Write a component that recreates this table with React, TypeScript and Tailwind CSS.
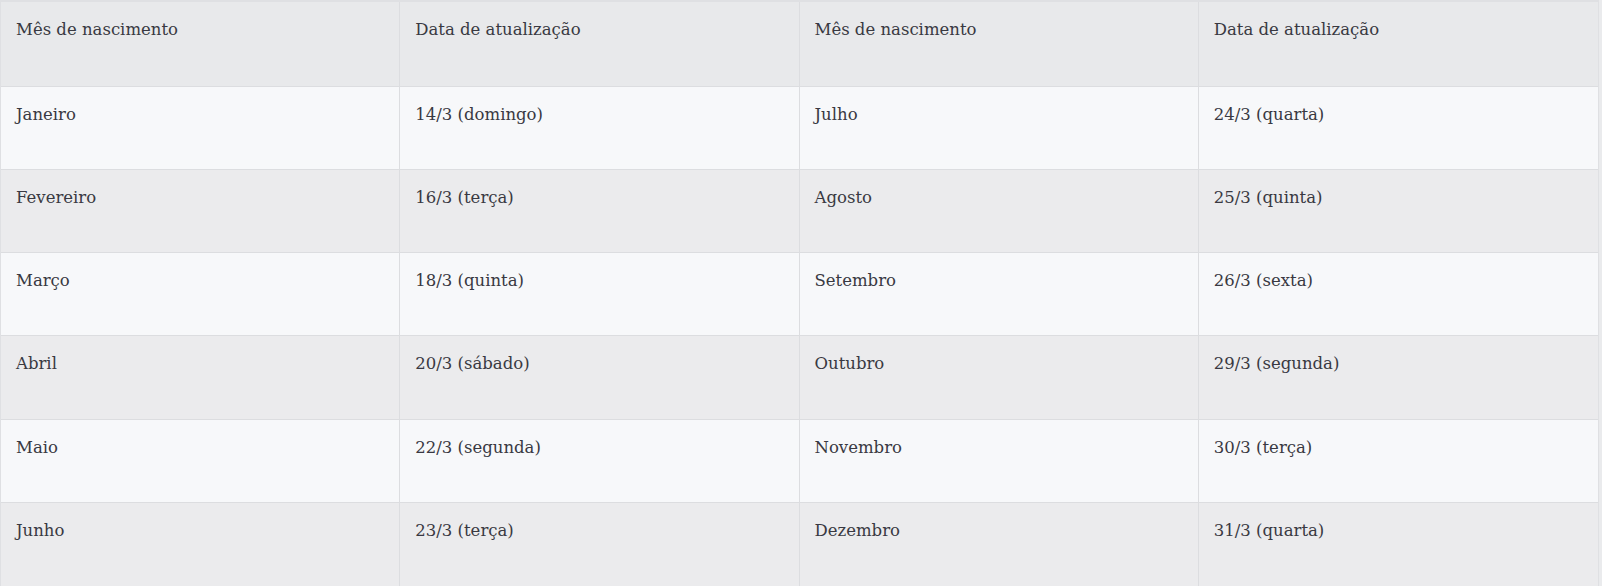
import React from "react";

const rows: [string, string, string, string][] = [
  ["Janeiro", "14/3 (domingo)", "Julho", "24/3 (quarta)"],
  ["Fevereiro", "16/3 (terça)", "Agosto", "25/3 (quinta)"],
  ["Março", "18/3 (quinta)", "Setembro", "26/3 (sexta)"],
  ["Abril", "20/3 (sábado)", "Outubro", "29/3 (segunda)"],
  ["Maio", "22/3 (segunda)", "Novembro", "30/3 (terça)"],
  ["Junho", "23/3 (terça)", "Dezembro", "31/3 (quarta)"],
];

const header = ["Mês de nascimento", "Data de atualização", "Mês de nascimento", "Data de atualização"];

export default function App() {
  return (
    <div
      className="w-[1602px] h-[586px] bg-[#eaebed] overflow-hidden text-[#393942] text-[16.5px] leading-6"
      style={{ fontFamily: '"DejaVu Serif", "Liberation Serif", serif' }}
    >
      <div className="w-[1599px] h-[586px] border-t-2 border-l border-r border-[#dfe0e3] grid grid-cols-4 grid-rows-[85px_repeat(6,1fr)]">
        {header.map((h, i) => (
          <div
            key={"h" + i}
            className={`bg-[#e8e9eb] pl-[15px] pr-4 pt-4 border-b border-[#dcdde0] ${i < 3 ? "border-r" : ""}`}
          >
            {h}
          </div>
        ))}
        {rows.map((r, ri) =>
          r.map((c, ci) => (
            <div
              key={ri + "-" + ci}
              className={`${ri % 2 === 0 ? "bg-[#f7f8fa]" : "bg-[#ebebed]"} pl-[15px] pr-4 pt-4 ${ri < 5 ? "border-b" : ""} ${ci < 3 ? "border-r" : ""} border-[#dcdde0]`}
            >
              {c}
            </div>
          ))
        )}
      </div>
    </div>
  );
}
